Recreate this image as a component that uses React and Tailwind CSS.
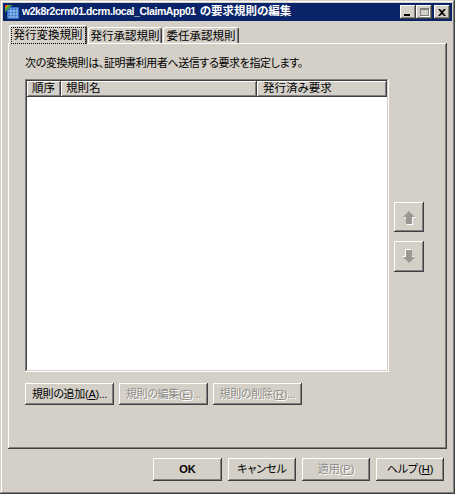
import React from 'react'

const FONT = "font-['Liberation_Sans','Noto_Sans_CJK_JP',sans-serif]"
const RAISED =
  'shadow-[inset_-1px_-1px_#404040,inset_1px_1px_#ffffff,inset_-2px_-2px_#808080,inset_2px_2px_#d4d0c8]'
const SUNKEN =
  'shadow-[inset_-1px_-1px_#ffffff,inset_1px_1px_#808080,inset_-2px_-2px_#d4d0c8,inset_2px_2px_#404040]'
const DISABLED = 'text-[#8e8c86] [text-shadow:1px_1px_0_#ffffff]'

const Key = ({ k }) => (
  <>
    (<span className="underline underline-offset-1">{k}</span>)
  </>
)

function Button({ children, disabled, className = '' }) {
  return (
    <div
      className={`${RAISED} bg-[#d4d0c8] flex items-center justify-center text-[11px] leading-none whitespace-nowrap ${
        disabled ? DISABLED : 'text-black'
      } ${className}`}
    >
      {children}
    </div>
  )
}

function AppIcon() {
  return (
    <svg width="16" height="16" viewBox="0 0 16 16">
      <rect x="3" y="3" width="12" height="12" rx="1" fill="#2f6fc6" />
      <path d="M4 7h10M4 10h10M4 13h10M7 4v10M10 4v10M13 4v10" stroke="#9cc4f0" strokeWidth="1" />
      <path d="M1 1h7L1 8z" fill="#f2c200" />
      <path d="M1 5l4-4h3L1 8z" fill="#3aa03a" />
      <path d="M1 1h3L1 4z" fill="#d93a2a" />
    </svg>
  )
}

function Arrow({ down }) {
  const pts = '6,0 12,6 9,6 9,13 3,13 3,6 0,6'
  return (
    <svg width="14" height="15" viewBox="0 0 14 15">
      <g transform={down ? 'rotate(180 7 7.5)' : undefined}>
        <polygon points={pts} transform="translate(2 2)" fill="#ffffff" />
        <polygon points={pts} transform="translate(1 1)" fill="#9a9893" />
      </g>
    </svg>
  )
}

function CapButton({ children, className = '' }) {
  return (
    <div className={`${RAISED} bg-[#d4d0c8] w-[16px] h-[14px] flex items-center justify-center ${className}`}>
      {children}
    </div>
  )
}

function Tab({ label, selected, className = '' }) {
  return (
    <div
      className={`bg-[#d4d0c8] border-t border-l border-r border-t-white border-l-white border-r-[#404040] rounded-t-[3px] shadow-[inset_-1px_0_#808080] flex justify-center ${
        selected ? 'h-[19px] pt-[2px] relative z-10' : 'h-[16px] mb-[1px] pt-[1px]'
      } ${className}`}
    >
      <span
        className={`text-[11.5px] leading-[13px] h-[15px] pt-px whitespace-nowrap ${
          selected ? 'px-[2px] outline-1 outline-dotted outline-black outline-offset-0' : ''
        }`}
      >
        {label}
      </span>
    </div>
  )
}

export default function App() {
  return (
    <div
      className={`${FONT} [font-feature-settings:'palt'] w-[455px] h-[494px] bg-[#d4d0c8] p-[3px] text-black shadow-[inset_-1px_-1px_#404040,inset_1px_1px_#d4d0c8,inset_-2px_-2px_#808080,inset_2px_2px_#ffffff] flex flex-col`}
    >
      {/* title bar */}
      <div className="h-[18px] bg-[#0a246a] flex items-center pl-[1px] pr-[2px]">
        <AppIcon />
        <span className="ml-[2px] text-white font-bold leading-none whitespace-nowrap flex items-baseline">
          <span className="text-[10.5px] tracking-[-0.45px]">w2k8r2crm01.dcrm.local_ClaimApp01</span>
          <span className="text-[11.5px] ml-[4px]">の要求規則の編集</span>
        </span>
        <div className="ml-auto flex items-center">
          <CapButton>
            <div className="w-[6px] h-[2px] bg-black mt-[6px] -ml-[2px]" />
          </CapButton>
          <CapButton>
            <div className="w-[9px] h-[8px] border border-t-2 border-[#808080] [box-shadow:1px_1px_0_#ffffff]" />
          </CapButton>
          <CapButton className="ml-[2px]">
            <svg width="8" height="7" viewBox="0 0 8 7">
              <path d="M0 0h2l2 2 2-2h2L5 3.5 8 7H6L4 5 2 7H0l3-3.5z" fill="#000" />
            </svg>
          </CapButton>
        </div>
      </div>

      {/* tabs + panel */}
      <div className="mt-[4px] mx-[5px]">
        <div className="flex items-end pl-[1px] gap-[1px] h-[19px]">
          <Tab label="発行変換規則" selected className="w-[78px]" />
          <Tab label="発行承認規則" className="w-[74px]" />
          <Tab label="委任承認規則" className="w-[76px]" />
        </div>
        <div className="-mt-px h-[406px] bg-[#d4d0c8] shadow-[inset_-1px_-1px_#404040,inset_1px_1px_#ffffff,inset_-2px_-2px_#808080] pl-[17px] pt-[14px]">
          <div className="text-[11px] tracking-[-0.4px] leading-[13px] h-[13px] whitespace-nowrap">
            次の変換規則は、証明書利用者へ送信する要求を指定します。
          </div>

          <div className="flex mt-[9px]">
            <div className={`${SUNKEN} w-[364px] h-[293px] bg-white p-[2px]`}>
              <div className="flex h-[16px] text-[11.5px] leading-none">
                <div className={`${RAISED} bg-[#d4d0c8] w-[34px] pl-[5px] pt-[2px]`}>順序</div>
                <div className={`${RAISED} bg-[#d4d0c8] w-[196px] pl-[5px] pt-[2px]`}>規則名</div>
                <div className={`${RAISED} bg-[#d4d0c8] w-[130px] pl-[6px] pt-[2px]`}>発行済み要求</div>
              </div>
            </div>
            <div className="ml-[5px] pt-[123px] flex flex-col gap-[9px]">
              <Button className="w-[30px] h-[30px]">
                <Arrow />
              </Button>
              <Button className="w-[30px] h-[31px]">
                <Arrow down />
              </Button>
            </div>
          </div>

          <div className="flex gap-[5px] mt-[11px] tracking-[-0.3px]">
            <Button className="w-[89px] h-[22px]">
              規則の追加<Key k="A" />...
            </Button>
            <Button disabled className="w-[89px] h-[22px]">
              規則の編集<Key k="E" />...
            </Button>
            <Button disabled className="w-[89px] h-[22px]">
              規則の削除<Key k="R" />...
            </Button>
          </div>
        </div>
      </div>

      {/* dialog buttons */}
      <div className="flex justify-end gap-[6px] mt-[9px] pr-[8px]">
        <Button className="w-[69px] h-[23px] font-bold">OK</Button>
        <Button className="w-[68px] h-[23px]">キャンセル</Button>
        <Button disabled className="w-[68px] h-[23px]">
          適用<Key k="P" />
        </Button>
        <Button className="w-[68px] h-[23px]">
          ヘルプ<Key k="H" />
        </Button>
      </div>
    </div>
  )
}
